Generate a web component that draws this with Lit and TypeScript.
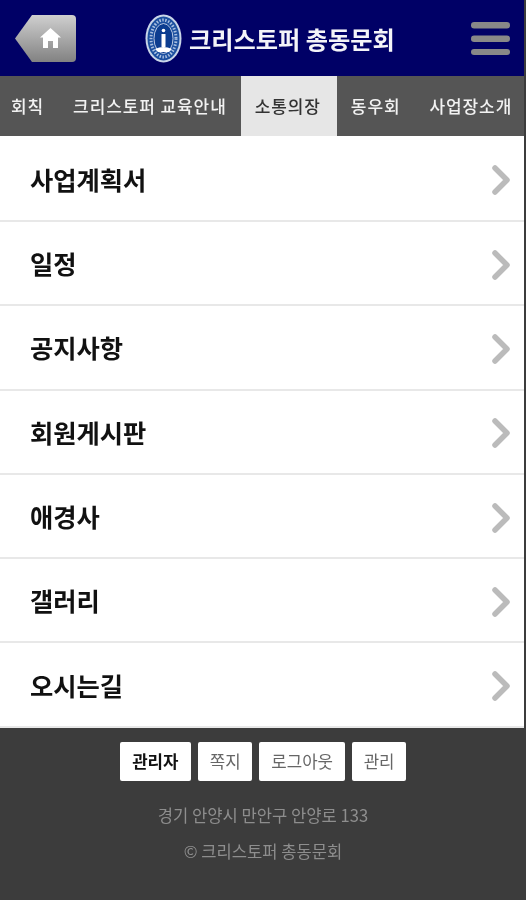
import {css, html, LitElement} from "lit";
import {customElement} from "lit/decorators.js";

const NAV = [
  {label: "회칙"},
  {label: "크리스토퍼 교육안내"},
  {label: "소통의장", active: true},
  {label: "동우회"},
  {label: "사업장소개"},
];

const MENU = ["사업계획서", "일정", "공지사항", "회원게시판", "애경사", "갤러리", "오시는길"];

const BUTTONS = [
  {label: "관리자", strong: true},
  {label: "쪽지"},
  {label: "로그아웃"},
  {label: "관리"},
];

@customElement("app-root")
export class AppRoot extends LitElement {
  static styles = css`
    :host {
      display: block;
      height: 900px;
      overflow: hidden;
      background: #3c3c3c;
      font-family: "Noto Sans CJK KR", "Noto Sans", sans-serif;
      filter: blur(0.4px);
    }

    .page {
      width: 524px;
      background: #fff;
      border-right: 2px solid #3c3c3c;
    }

    .header {
      display: flex;
      align-items: center;
      justify-content: space-between;
      height: 76px;
      background: #000066;
      padding: 0 14px 0 15px;
      box-sizing: border-box;
    }

    .brand {
      display: flex;
      align-items: center;
      gap: 7px;
      color: #f4f4f8;
      font-size: 24.200px;
      font-weight: 700;
      white-space: nowrap;
      margin-left: -7px;
    }

    .nav {
      display: flex;
      height: 60px;
      background: #555;
      color: #f2f2f2;
      font-size: 17px;
      font-weight: 500;
      white-space: nowrap;
    }

    .nav a {
      display: flex;
      align-items: center;
      padding: 0 14px 2px;
      letter-spacing: 0.9px;
    }

    .nav a:first-child {
      padding-left: 11px;
      padding-right: 15px;
    }

    .nav a:last-child {
      padding-left: 15px;
    }

    .nav a.active {
      padding: 0 16px 2px 14px;
      background: #e6e6e6;
      color: #333;
    }

    .menu {
      display: grid;
      grid-auto-rows: 84.300px;
      padding-top: 1.700px;
    }

    .menu a {
      display: flex;
      align-items: center;
      justify-content: space-between;
      padding: 0 14px 0 30px;
      border-bottom: 2px solid #e8e8e8;
      box-sizing: border-box;
      color: #111;
      font-size: 25.300px;
      font-weight: 700;
    }

    .menu svg {
      margin-top: 3px;
    }

    .footer {
      display: flex;
      flex-direction: column;
      align-items: center;
      padding-top: 14px;
      background: #3c3c3c;
      color: #8e8e8e;
      font-size: 16.600px;
    }

    .buttons {
      display: flex;
      gap: 7px;
      margin-bottom: 16px;
    }

    .buttons a {
      display: flex;
      align-items: center;
      padding: 0 11.800px;
      height: 39px;
      background: #fff;
      border-radius: 2px;
      color: #666;
      font-size: 16.800px;
    }

    .buttons a.strong {
      padding: 0 12.500px;
      color: #111;
      font-weight: 700;
    }

    .footer p {
      margin: 0;
      line-height: 36px;
    }
  `;

  render() {
    return html`
      <div class="page">
        <header class="header">
          <svg width="61" height="47" viewBox="0 0 61 47">
            <defs>
              <linearGradient id="back" x1="0" y1="0" x2="0" y2="1">
                <stop offset="0" stop-color="#cfcfcf" />
                <stop offset="1" stop-color="#828282" />
              </linearGradient>
            </defs>
            <path d="M17 0H57Q61 0 61 4V43Q61 47 57 47H17L0 23.500Z" fill="url(#back)" />
            <path d="M25 22.500L35.500 13L46 22.500H43V33H38V26H33V33H28V22.500Z" fill="#fff" />
          </svg>
          <div class="brand">
            <svg width="37" height="49" viewBox="0 0 37 49">
              <ellipse cx="18.500" cy="24.500" rx="18" ry="24" fill="#c9d5e8" />
              <ellipse cx="18.500" cy="24.500" rx="16" ry="22" fill="#1c50a0" />
              <ellipse cx="18.500" cy="24.500" rx="12.500" ry="18.500" fill="none" stroke="#a9bfe0" stroke-width="3" stroke-dasharray="1.500 1.500" />
              <ellipse cx="18.500" cy="24.500" rx="9.500" ry="15" fill="#0c3d90" stroke="#dfe6f2" stroke-width="0.800" />
              <rect x="16.500" y="20" width="4" height="13" fill="#fff" />
              <circle cx="18.500" cy="16.500" r="1.800" fill="#fff" />
              <path d="M10 35Q18.500 31 27 35L24 38H13Z" fill="#fff" />
            </svg>
            <span>크리스토퍼 총동문회</span>
          </div>
          <svg width="39" height="33" viewBox="0 0 39 33">
            <rect y="0" width="39" height="6.500" rx="3.200" fill="#888" />
            <rect y="13.500" width="39" height="6.500" rx="3.200" fill="#888" />
            <rect y="27" width="39" height="6" rx="3" fill="#888" />
          </svg>
        </header>
        <nav class="nav">
          ${NAV.map((item) => html`<a class=${item.active ? "active" : ""}>${item.label}</a>`)}
        </nav>
        <div class="menu">
          ${MENU.map(
            (label) => html`
              <a>
                <span>${label}</span>
                <svg width="18" height="30" viewBox="0 0 18 30">
                  <path d="M3 3L15 15L3 27" fill="none" stroke="#bbb" stroke-width="5.500" stroke-linecap="round" stroke-linejoin="round" />
                </svg>
              </a>
            `
          )}
        </div>
      </div>
      <footer class="footer">
        <div class="buttons">
          ${BUTTONS.map((b) => html`<a class=${b.strong ? "strong" : ""}>${b.label}</a>`)}
        </div>
        <p>경기 안양시 만안구 안양로 133</p>
        <p>© 크리스토퍼 총동문회</p>
      </footer>
    `;
  }
}

declare global {
  interface HTMLElementTagNameMap {
    "app-root": AppRoot;
  }
}
